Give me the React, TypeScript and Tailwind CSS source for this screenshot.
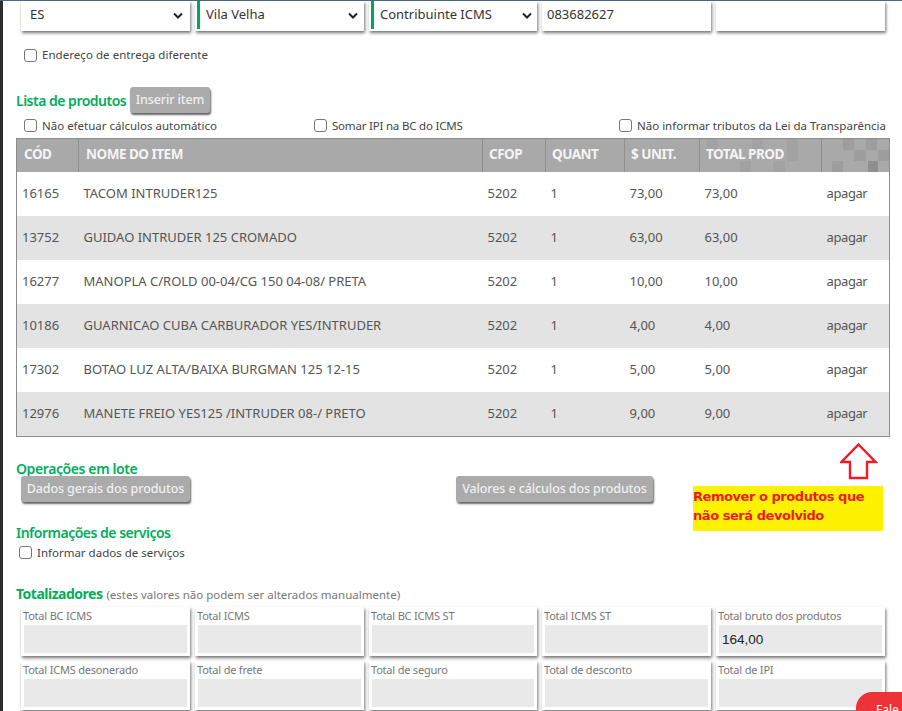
const font = "font-['Noto_Sans','Open_Sans',sans-serif]"

const rows = [
  { cod: '16165', nome: 'TACOM INTRUDER125', unit: '73,00' },
  { cod: '13752', nome: 'GUIDAO INTRUDER 125 CROMADO', unit: '63,00' },
  { cod: '16277', nome: 'MANOPLA C/ROLD 00-04/CG 150 04-08/ PRETA', unit: '10,00' },
  { cod: '10186', nome: 'GUARNICAO CUBA CARBURADOR YES/INTRUDER', unit: '4,00' },
  { cod: '17302', nome: 'BOTAO LUZ ALTA/BAIXA BURGMAN 125 12-15', unit: '5,00' },
  { cod: '12976', nome: 'MANETE FREIO YES125 /INTRUDER 08-/ PRETO', unit: '9,00' },
]

const totais = [
  { label: 'Total BC ICMS' },
  { label: 'Total ICMS' },
  { label: 'Total BC ICMS ST' },
  { label: 'Total ICMS ST' },
  { label: 'Total bruto dos produtos', value: '164,00' },
  { label: 'Total ICMS desonerado' },
  { label: 'Total de frete' },
  { label: 'Total de seguro' },
  { label: 'Total de desconto' },
  { label: 'Total de IPI' },
]

const Check = ({ label, className = '' }: { label: string; className?: string }) => (
  <label className={`flex items-center gap-[5px] text-[11.5px] text-[#444] ${className}`}>
    <span className="w-[13px] h-[13px] rounded-[3px] border border-[#767676] bg-white" />
    {label}
  </label>
)

const Chevron = ({ className = '' }: { className?: string }) => (
  <svg width="10" height="7" viewBox="0 0 10 7" className={`ml-auto shrink-0 ${className}`}>
    <path d="M1 1.5 5 5.5 9 1.5" fill="none" stroke="#222" strokeWidth="2" />
  </svg>
)

const GrayButton = ({ children, className = '' }: { children: string; className?: string }) => (
  <button className={`h-[26px] rounded-[3px] bg-[#ababab] text-[12.5px] font-medium tracking-[-0.1px] text-[#f0f0f0] shadow-[1px_2px_2px_rgba(0,0,0,0.6)] ${className}`}>
    {children}
  </button>
)

const TopCard = ({ children, green = false }: { children?: React.ReactNode; green?: boolean }) => (
  <div className="relative h-[30px] bg-white flex items-center pb-[2px] text-[13px] text-[#333] shadow-[1px_2px_3px_rgba(0,0,0,0.55)]">
    {green && <span className="absolute left-[2px] top-0 w-[3px] h-[28px] bg-[#00a65a]" />}
    {children}
  </div>
)

const th = 'text-left align-middle font-bold text-[13.5px] tracking-[-0.5px] text-[#f4f4f4] pb-[3px] border-r border-[#8f8f8f]'
const td = 'align-middle text-[13px] text-[#555] pl-[5px] pb-[1px]'

export default function App() {
  return (
    <div className={`relative h-[711px] w-[902px] overflow-hidden bg-white ${font}`}>
      <div className="h-px bg-[#4a6a85]" />
      <div className="flex h-[710px]">
        <div className="w-[3px] bg-[#2d2d2d] shrink-0" />
        <div className="flex-1 pl-[13px] pr-[12px]">
          {/* linha do endereco */}
          <div className="ml-[5px] grid grid-cols-[169px_169px_168px_169px_169px] gap-x-[5px] w-[869px]">
            <TopCard>
              <span className="pl-[9px]">ES</span>
              <Chevron className="mr-[7px]" />
            </TopCard>
            <TopCard green>
              <span className="pl-[11px]">Vila Velha</span>
              <Chevron className="mr-[6px]" />
            </TopCard>
            <TopCard green>
              <span className="pl-[11px]">Contribuinte ICMS</span>
              <Chevron className="mr-[5px]" />
            </TopCard>
            <TopCard>
              <span className="pl-[5px]">083682627</span>
            </TopCard>
            <TopCard />
          </div>

          <Check label="Endereço de entrega diferente" className="ml-[8px] mt-[15px] h-[18px] tracking-[0.05px]" />

          <div className="mt-[23px] flex items-center h-[26px]">
            <h2 className="text-[14px] font-semibold text-[#00ae5b] tracking-[-0.5px] w-[114px] whitespace-nowrap">Lista de produtos</h2>
            <GrayButton className="w-[80px]">Inserir item</GrayButton>
          </div>

          <div className="mt-[3px] h-[19px] flex items-center">
            <Check label="Não efetuar cálculos automático" className="ml-[8px] w-[290px]" />
            <Check label="Somar IPI na BC do ICMS" className="w-[305px] tracking-[-0.2px]" />
            <Check label="Não informar tributos da Lei da Transparência" />
          </div>

          <table className="w-[873px] table-fixed border-collapse border border-[#8c8c8c] mt-[3px]">
            <colgroup>
              <col className="w-[62px]" />
              <col className="w-[404px]" />
              <col className="w-[63px]" />
              <col className="w-[79px]" />
              <col className="w-[75px]" />
              <col className="w-[122px]" />
              <col className="w-[68px]" />
            </colgroup>
            <thead>
              <tr className="h-[33px] bg-[#a9a9a9]">
                <th className={`${th} pl-[7px]`}>CÓD</th>
                <th className={`${th} pl-[7px]`}>NOME DO ITEM</th>
                <th className={`${th} pl-[6px]`}>CFOP</th>
                <th className={`${th} pl-[6px]`}>QUANT</th>
                <th className={`${th} pl-[6px]`}>$ UNIT.</th>
                <th className={`${th} pl-[6px] relative`}>
                  <svg width="121" height="33" viewBox="0 0 121 33" className="absolute left-0 top-0">
                    <g fill="#a2a2a2">
                      <rect x="7" y="0" width="11" height="11" />
                      <rect x="52" y="0" width="11" height="11" />
                      <rect x="87" y="0" width="11" height="22" />
                      <rect x="40" y="22" width="11" height="11" />
                      <rect x="73" y="22" width="12" height="11" />
                    </g>
                  </svg>
                  <span className="relative">TOTAL PROD</span>
                </th>
                <th className="relative p-0">
                  <svg width="67" height="33" viewBox="0 0 67 33" className="block">
                    <g fill="#9d9d9d">
                      <rect x="21" y="0" width="11" height="11" />
                      <rect x="44" y="0" width="11" height="11" />
                      <rect x="32" y="11" width="12" height="11" />
                      <rect x="56" y="11" width="11" height="11" />
                      <rect x="10" y="22" width="11" height="11" />
                      <rect x="46" y="22" width="10" height="11" fill="#8f8f8f" />
                    </g>
                  </svg>
                </th>
              </tr>
            </thead>
            <tbody>
              {rows.map((r, i) => (
                <tr key={r.cod} className={`h-[44px] ${i % 2 ? 'bg-[#e3e3e3]' : 'bg-white'}`}>
                  <td className={td}>{r.cod}</td>
                  <td className={td}>{r.nome}</td>
                  <td className={td}>5202</td>
                  <td className={td}>1</td>
                  <td className={td}>{r.unit}</td>
                  <td className={td}>{r.unit}</td>
                  <td className={`${td} tracking-[-0.4px]`}>apagar</td>
                </tr>
              ))}
            </tbody>
          </table>

          <h2 className="mt-[23px] h-[18px] leading-[18px] text-[14px] font-semibold text-[#00ae5b] tracking-[-0.4px]">Operações em lote</h2>
          <div className="mt-[-2px] ml-[5px] flex">
            <GrayButton className="w-[169px] pt-[1px]">Dados gerais dos produtos</GrayButton>
            <GrayButton className="ml-[266px] w-[197px] pt-[1px]">Valores e cálculos dos produtos</GrayButton>
          </div>

          <h2 className="mt-[22px] h-[18px] leading-[18px] text-[14px] font-semibold text-[#00ae5b] tracking-[-0.5px]">Informações de serviços</h2>
          <Check label="Informar dados de serviços" className="ml-[3px] mt-[2px] h-[18px]" />

          <div className="mt-[23px] flex items-baseline gap-[4px] h-[18px] leading-[18px]">
            <h2 className="text-[14px] font-bold text-[#00ae5b] tracking-[-0.5px]">Totalizadores</h2>
            <span className="text-[11.5px] text-[#777]">(estes valores não podem ser alterados manualmente)</span>
          </div>

          <div className="mt-[4px] ml-[5px] grid grid-cols-[169px_169px_168px_169px_169px] gap-x-[5px] gap-y-[5px] w-[869px]">
            {totais.map((t) => (
              <div key={t.label} className="h-[49px] bg-white px-[3px] shadow-[1px_2px_3px_rgba(0,0,0,0.55)]">
                <div className="h-[18px] ml-[-1px] leading-[18px] text-[11px] tracking-[-0.2px] text-[#777] whitespace-nowrap">{t.label}</div>
                <div className="h-[28px] bg-[#e9e9e9] pl-[3px] leading-[29px] text-[13.5px] text-[#222] font-['Liberation_Sans',sans-serif]">
                  {t.value}
                </div>
              </div>
            ))}
          </div>
        </div>
      </div>

      {/* anotacao por cima da tela */}
      <svg width="38" height="38" viewBox="0 0 38 38" className="absolute left-[840px] top-[443px]">
        <path d="M18.5 1.5 35.5 19H27V35H10V19H1.5Z" fill="#fff" stroke="#ed1c24" strokeWidth="2.4" />
      </svg>
      <div className="absolute left-[693px] top-[486px] w-[190px] h-[45px] bg-[#fff200] pt-[1px] text-[13px] leading-[19px] font-bold text-[#ed1c24] font-['DejaVu_Sans',sans-serif] tracking-[-0.45px]">
        Remover o produtos que
        <br />
        não será devolvido
      </div>

      <div className="absolute left-[856px] top-[692px] w-[60px] h-[30px] rounded-tl-[16px] bg-[#ee3338] pl-[20px] pt-[9px] text-[12px] text-white">
        Fale
      </div>
    </div>
  )
}
